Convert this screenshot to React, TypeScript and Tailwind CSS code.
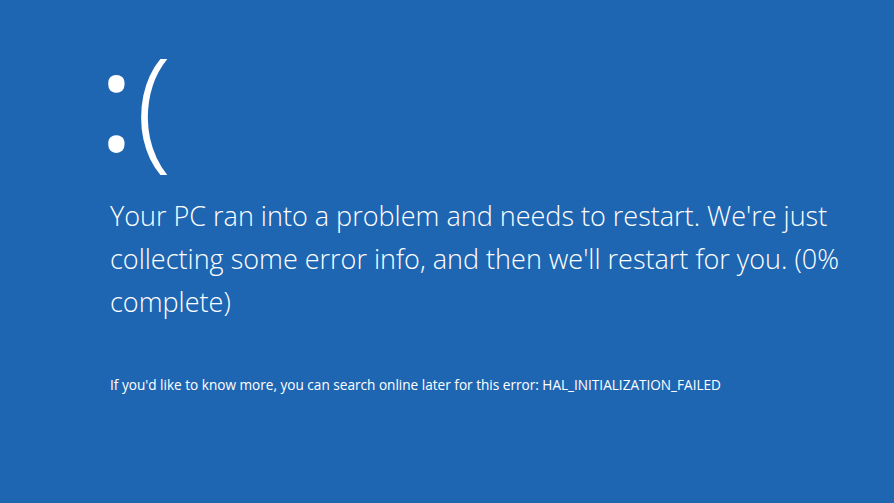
import React from "react";

const App: React.FC = () => {
    return (
        <div
            className="w-[894px] h-[503px] bg-[#1f66b2] text-white overflow-hidden"
            style={{ fontFamily: '"Open Sans", "Noto Sans", sans-serif' }}
        >
            <div className="pl-[110px] pt-[30px]">
                <div className="flex items-start -ml-[12px] h-[150px] leading-[150px]">
                    <span className="text-[140px] font-normal -mt-[8px]">:</span>
                    <span className="text-[132px] font-light ml-[1px] -mt-[2px]">(</span>
                </div>
                <p className="mt-[14px] text-[27px] leading-[43px] font-light w-[760px]">
                    Your PC ran into a problem and needs to restart. We're just collecting some error info, and then we'll restart for you. (0% complete)
                </p>
                <p className="mt-[53px] text-[13.6px] leading-[18px]">
                    If you'd like to know more, you can search online later for this error: HAL_INITIALIZATION_FAILED
                </p>
            </div>
        </div>
    );
};

export default App;
